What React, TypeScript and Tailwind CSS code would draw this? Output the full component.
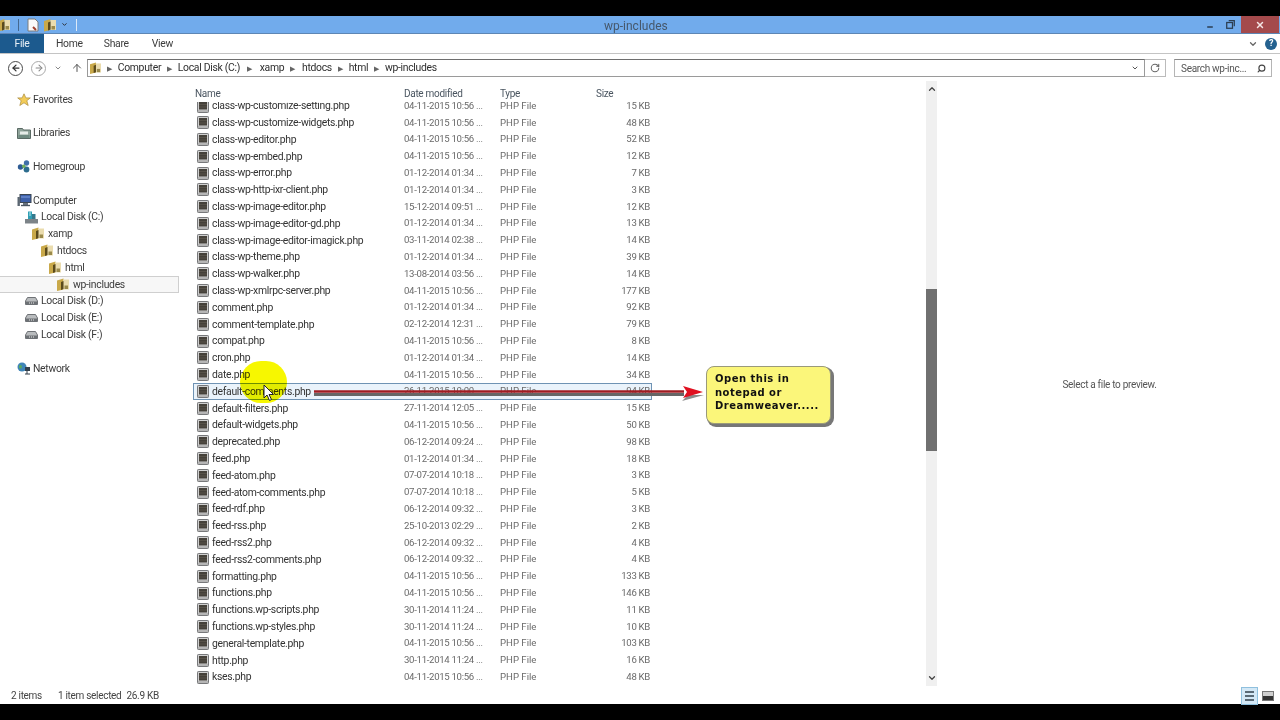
import { ArrowLeft, ArrowRight, ArrowUp, ChevronDown, ChevronUp, RotateCw, Search, X, Minus } from "lucide-react";
import type { ReactNode } from "react";

const files: [string, string, string][] = [
  ["class-wp-customize-setting.php", "04-11-2015 10:56 ...", "15 KB"],
  ["class-wp-customize-widgets.php", "04-11-2015 10:56 ...", "48 KB"],
  ["class-wp-editor.php", "04-11-2015 10:56 ...", "52 KB"],
  ["class-wp-embed.php", "04-11-2015 10:56 ...", "12 KB"],
  ["class-wp-error.php", "01-12-2014 01:34 ...", "7 KB"],
  ["class-wp-http-ixr-client.php", "01-12-2014 01:34 ...", "3 KB"],
  ["class-wp-image-editor.php", "15-12-2014 09:51 ...", "12 KB"],
  ["class-wp-image-editor-gd.php", "01-12-2014 01:34 ...", "13 KB"],
  ["class-wp-image-editor-imagick.php", "03-11-2014 02:38 ...", "14 KB"],
  ["class-wp-theme.php", "01-12-2014 01:34 ...", "39 KB"],
  ["class-wp-walker.php", "13-08-2014 03:56 ...", "14 KB"],
  ["class-wp-xmlrpc-server.php", "04-11-2015 10:56 ...", "177 KB"],
  ["comment.php", "01-12-2014 01:34 ...", "92 KB"],
  ["comment-template.php", "02-12-2014 12:31 ...", "79 KB"],
  ["compat.php", "04-11-2015 10:56 ...", "8 KB"],
  ["cron.php", "01-12-2014 01:34 ...", "14 KB"],
  ["date.php", "04-11-2015 10:56 ...", "34 KB"],
  ["default-comments.php", "26-11-2015 10:00 ...", "94 KB"],
  ["default-filters.php", "27-11-2014 12:05 ...", "15 KB"],
  ["default-widgets.php", "04-11-2015 10:56 ...", "50 KB"],
  ["deprecated.php", "06-12-2014 09:24 ...", "98 KB"],
  ["feed.php", "01-12-2014 01:34 ...", "18 KB"],
  ["feed-atom.php", "07-07-2014 10:18 ...", "3 KB"],
  ["feed-atom-comments.php", "07-07-2014 10:18 ...", "5 KB"],
  ["feed-rdf.php", "06-12-2014 09:32 ...", "3 KB"],
  ["feed-rss.php", "25-10-2013 02:29 ...", "2 KB"],
  ["feed-rss2.php", "06-12-2014 09:32 ...", "4 KB"],
  ["feed-rss2-comments.php", "06-12-2014 09:32 ...", "4 KB"],
  ["formatting.php", "04-11-2015 10:56 ...", "133 KB"],
  ["functions.php", "04-11-2015 10:56 ...", "146 KB"],
  ["functions.wp-scripts.php", "30-11-2014 11:24 ...", "11 KB"],
  ["functions.wp-styles.php", "30-11-2014 11:24 ...", "10 KB"],
  ["general-template.php", "04-11-2015 10:56 ...", "103 KB"],
  ["http.php", "30-11-2014 11:24 ...", "16 KB"],
  ["kses.php", "04-11-2015 10:56 ...", "48 KB"],
];

const FolderIcon = ({ className = "" }: { className?: string }) => (
  <svg viewBox="0 0 12 13" className={className}>
    <path d="M0 2.5 6.5.5v11L0 13z" fill="#c9a94a" />
    <path d="M6.5 1.5H12v10H6.5z" fill="#eadcae" />
    <path d="M4 4l2.5-1v8L4 12z" fill="#5a4a1c" />
    <path d="M7.5 7.5H11v3.5H7.5z" fill="#9a8a4c" />
  </svg>
);

const PhpIcon = () => (
  <svg viewBox="0 0 12 13" className="w-3 h-[13px] shrink-0">
    <rect x="0.5" y="0.5" width="11" height="12" rx="0.8" fill="#cfcfcf" stroke="#77787a" />
    <rect x="2" y="2" width="8" height="7.5" fill="#45413a" />
    <path d="M2 4.5h8M2 7h8" stroke="#5f5a50" strokeWidth="0.7" />
    <path d="M1 11h10" stroke="#9c9c9c" />
  </svg>
);

const DriveIcon = () => (
  <svg viewBox="0 0 13 8" className="w-[13px] h-2 shrink-0">
    <path d="M2.5.5h8L12.5 4v3.5H.5V4z" fill="#b9bcbe" stroke="#6f7276" />
    <path d="M1 4.5h11v3H1z" fill="#6d7175" />
    <path d="M4 6h1M6 6h1M8 6h1" stroke="#e8e8e8" />
  </svg>
);

const Star = () => (
  <svg viewBox="0 0 14 14" className="w-[14px] h-[14px]">
    <path d="M7 .8l1.9 4.1h4.4L9.8 7.7l1.4 4.8L7 9.8l-4.2 2.7 1.4-4.8L.7 4.9h4.4z" fill="#f3cc58" stroke="#a98a3a" strokeWidth="0.7" />
  </svg>
);

const LibIcon = () => (
  <svg viewBox="0 0 14 12" className="w-[14px] h-3">
    <path d="M.5 1.5h5l1 1.5h7v8.5H.5z" fill="#8fa39a" stroke="#5a6a64" />
    <path d="M3 4.5h8v3H3z" fill="#e6ece8" />
    <path d="M1.5 8h11v3h-11z" fill="#6f8a80" />
  </svg>
);

const HomeIcon = () => (
  <svg viewBox="0 0 14 13" className="w-[14px] h-[13px]">
    <circle cx="9.5" cy="3" r="2.7" fill="#3f6fa8" />
    <circle cx="3.5" cy="7" r="2.7" fill="#2e5c94" />
    <circle cx="9.5" cy="9.5" r="2.9" fill="#2d6d8e" />
    <circle cx="6.8" cy="6.2" r="1.8" fill="#6fae5a" />
  </svg>
);

const ComputerIcon = () => (
  <svg viewBox="0 0 15 13" className="w-[15px] h-[13px]">
    <rect x="3" y="0.5" width="11" height="8" fill="#3c5fa8" stroke="#3b4652" />
    <path d="M4 3h9" stroke="#7f9fe0" />
    <path d="M6 9h5v2H6z" fill="#6a7480" />
    <path d="M0.5 3h2.4v9H0.5z" fill="#5b6672" />
    <path d="M4 11.5h9" stroke="#4a5560" strokeWidth="1.4" />
  </svg>
);

const SystemDriveIcon = () => (
  <svg viewBox="0 0 13 13" className="w-[13px] h-[13px]">
    <path d="M0 8h13v4.5H0z" fill="#7c8388" />
    <path d="M3 .5h4v7.5H3z" fill="#2f9fb4" />
    <path d="M7 3h3.5v5H7z" fill="#35788c" />
    <path d="M4 2h2M4 4h2" stroke="#bfe6ee" />
  </svg>
);

const NetworkIcon = () => (
  <svg viewBox="0 0 14 13" className="w-[14px] h-[13px]">
    <circle cx="5" cy="5" r="4.5" fill="#3f85b8" />
    <path d="M2 3.5c2-1 3 0 3 1.5S3 7 2 6z" fill="#57a860" />
    <rect x="8" y="5" width="5" height="4" fill="#34404c" />
    <path d="M10 9v3M8 12h5" stroke="#34404c" />
  </svg>
);

const sep = <span className="text-[7px] text-[#666] leading-none">▶</span>;

function NavRow({ icon, label, indent, selected }: { icon?: ReactNode; label?: string; indent?: string; selected?: boolean }) {
  return (
    <div className={"flex items-center h-[16.8px] w-[179px] " + (indent ?? "") + (selected ? " bg-[#f7f7f7] border-y border-r border-[#cfcfcf]" : "")}>
      {icon && <span className="w-4 shrink-0 flex justify-start">{icon}</span>}
      {label && <span className="whitespace-nowrap">{label}</span>}
    </div>
  );
}

function App() {
  return (
    <div className="relative w-[1280px] h-[720px] bg-black overflow-hidden flex flex-col text-[10.4px] tracking-[-0.3px] text-[#3c3c3c] font-['Roboto','Noto_Sans',sans-serif] blur-[0.35px]">
      <div className="h-4 shrink-0 bg-black" />

      <div className="h-[18px] shrink-0 bg-[#71abec] border-b border-[#5d86b4] flex items-center relative">
        <FolderIcon className="w-3 h-[14px] -ml-[2px]" />
        <div className="w-px h-3 bg-[#44688f] ml-2" />
        <svg viewBox="0 0 12 14" className="w-3 h-[14px] ml-[8px]">
          <path d="M1 1h7l3 3v9H1z" fill="#fafafa" stroke="#7d7d7d" />
          <path d="M6 9l3 3" stroke="#a04030" strokeWidth="2" />
        </svg>
        <FolderIcon className="w-3 h-[14px] ml-[5px]" />
        <ChevronDown size={7} className="ml-[5px] text-[#222]" strokeWidth={3} />
        <div className="w-px h-3 bg-[#dbe9f8] ml-[8px]" />
        <div className="absolute left-[604px] top-[1px] h-full flex items-center text-[12px] tracking-normal text-[#46586c]">wp-includes</div>
        <div className="ml-auto flex items-center h-full">
          <Minus size={8} strokeWidth={4} className="text-[#2b3e52] mr-3 mt-1" />
          <svg viewBox="0 0 10 10" className="w-[9px] h-[9px] mr-[6px]">
            <path d="M3 .8h6.2V7" fill="none" stroke="#2b3e52" strokeWidth="1.4" />
            <rect x="0.8" y="2.8" width="6.4" height="6.4" fill="none" stroke="#2b3e52" strokeWidth="1.4" />
          </svg>
          <div className="w-[38px] h-[17px] bg-[#a44a4c] flex items-center justify-center mr-[1px]">
            <X size={10} strokeWidth={3.5} className="text-[#f4e6e6]" />
          </div>
        </div>
      </div>

      <div className="h-[20px] shrink-0 bg-white border-b border-[#c4c4c4] flex items-center relative">
        <div className="w-11 h-full bg-[#1c5a8e] text-[#e8f0f6] flex items-center justify-center pt-[1px]">File</div>
        <div className="ml-[12px] pt-[1px]">Home</div>
        <div className="ml-[21px] pt-[1px]">Share</div>
        <div className="ml-[23px] pt-[1px]">View</div>
        <ChevronDown size={10} strokeWidth={3} className="ml-auto text-[#666] mr-[7px]" />
        <div className="w-3 h-3 rounded-full bg-[#24618f] text-white flex items-center justify-center text-[9px] font-bold mr-[3px]">?</div>
      </div>

      <div className="h-[27px] shrink-0 bg-white flex items-center pt-[1px]">
        <div className="w-[15px] h-[15px] ml-2 rounded-full border border-[#4a4a4a] flex items-center justify-center">
          <ArrowLeft size={10} strokeWidth={3} className="text-[#333]" />
        </div>
        <div className="w-[15px] h-[15px] ml-2 rounded-full border border-[#a9a9a9] flex items-center justify-center">
          <ArrowRight size={10} strokeWidth={2.5} className="text-[#888]" />
        </div>
        <ChevronDown size={8} strokeWidth={3} className="ml-[8px] text-[#888]" />
        <ArrowUp size={12} strokeWidth={2} className="ml-[9px] text-[#555]" />
        <div className="ml-[4px] w-[1058px] h-[18px] border border-[#9a9a9a] border-t-[#6e6e6e] flex items-center text-[#2e2e2e]">
          <FolderIcon className="w-[11px] h-3 ml-[2px]" />
          <div className="ml-[6px]">{sep}</div>
          <span className="ml-[6px]">Computer</span>
          <div className="ml-[6px]">{sep}</div>
          <span className="ml-[6px]">Local Disk (C:)</span>
          <div className="ml-[7px]">{sep}</div>
          <span className="ml-[8px]">xamp</span>
          <div className="ml-[6px]">{sep}</div>
          <span className="ml-[7px]">htdocs</span>
          <div className="ml-[6px]">{sep}</div>
          <span className="ml-[6px]">html</span>
          <div className="ml-[6px]">{sep}</div>
          <span className="ml-[6px]">wp-includes</span>
          <ChevronDown size={8} strokeWidth={3} className="ml-auto text-[#555] mr-[5px]" />
        </div>
        <div className="h-[18px] w-[21px] border-y border-r border-[#bbbbbb] flex items-center justify-center">
          <RotateCw size={10} strokeWidth={2.5} className="text-[#666]" />
        </div>
        <div className="ml-[8px] w-[98px] h-[18px] border border-[#b5b5b5] border-t-[#8a8a8a] flex items-center pl-[6px] text-[10px] text-[#555]">
          <span>Search wp-inc...</span>
          <Search size={9} strokeWidth={3} className="ml-auto mr-[5px] -scale-x-100 text-[#444]" />
        </div>
      </div>

      <div className="flex-1 min-h-0 bg-white flex">
        <div className="w-[193px] shrink-0 pt-[10.2px]">
          <NavRow indent="pl-[17px]" icon={<Star />} label="Favorites" />
          <NavRow />
          <NavRow indent="pl-[17px]" icon={<LibIcon />} label="Libraries" />
          <NavRow />
          <NavRow indent="pl-[17px]" icon={<HomeIcon />} label="Homegroup" />
          <NavRow />
          <NavRow indent="pl-[17px]" icon={<ComputerIcon />} label="Computer" />
          <NavRow indent="pl-[25px]" icon={<SystemDriveIcon />} label="Local Disk (C:)" />
          <NavRow indent="pl-[32px]" icon={<FolderIcon className="w-3 h-[13px]" />} label="xamp" />
          <NavRow indent="pl-[41px]" icon={<FolderIcon className="w-3 h-[13px]" />} label="htdocs" />
          <NavRow indent="pl-[49px]" icon={<FolderIcon className="w-3 h-[13px]" />} label="html" />
          <NavRow indent="pl-[57px]" icon={<FolderIcon className="w-3 h-[13px]" />} label="wp-includes" selected />
          <NavRow indent="pl-[25px]" icon={<DriveIcon />} label="Local Disk (D:)" />
          <NavRow indent="pl-[25px]" icon={<DriveIcon />} label="Local Disk (E:)" />
          <NavRow indent="pl-[25px]" icon={<DriveIcon />} label="Local Disk (F:)" />
          <NavRow />
          <NavRow indent="pl-[17px]" icon={<NetworkIcon />} label="Network" />
        </div>

        <div className="w-[733px] shrink-0 flex flex-col min-h-0">
          <div className="h-[17px] shrink-0 flex items-center mt-[4px] text-[#4a5560] text-[10px]">
            <div className="w-[211px] pl-[2px]">Name</div>
            <div className="w-[96px]">Date modified</div>
            <div className="w-[96px]">Type</div>
            <div>Size</div>
          </div>
          <div className="flex-1 min-h-0 overflow-hidden">
            <div className="-mt-[4.4px]">
              {files.map(([name, date, size], i) => (
                <div
                  key={name}
                  className={"flex items-center h-[16.8px] w-[459px] " + (i === 17 ? "border border-[#6f93b4] bg-[#eaf3fb]" : "border border-transparent")}
                >
                  <div className="w-[210px] shrink-0 pl-[3px] flex items-center gap-[3px] text-[#333] whitespace-nowrap">
                    <PhpIcon />
                    <span>{name}</span>
                  </div>
                  <div className="w-[96px] shrink-0 text-[#6a6a6a] whitespace-nowrap text-[9.6px]">{date}</div>
                  <div className="w-[60px] shrink-0 text-[#6a6a6a] text-[9.6px] tracking-normal">PHP File</div>
                  <div className="flex-1 text-right pr-[1px] text-[#6a6a6a] text-[9.6px]">{size}</div>
                </div>
              ))}
            </div>
          </div>
        </div>

        <div className="w-[11px] shrink-0 bg-[#f0f0f0] flex flex-col items-center">
          <div className="h-[208px] w-full shrink-0 flex justify-center pt-[3px]">
            <ChevronUp size={10} strokeWidth={3} className="text-[#444]" />
          </div>
          <div className="h-[162px] w-full shrink-0 bg-[#707070]" />
          <div className="flex-1" />
          <ChevronDown size={10} strokeWidth={3} className="text-[#444] mb-[3px]" />
        </div>

        <div className="flex-1 flex items-center justify-center pt-[1px] text-[#555] text-[10px]">
          <span className="ml-[2px]">Select a file to preview.</span>
        </div>
      </div>

      <div className="h-[18px] shrink-0 bg-white flex items-center relative text-[#444] text-[10px] pt-[1px]">
        <span className="ml-[11px]">2 items</span>
        <span className="ml-[16px]">1 item selected</span>
        <span className="ml-[5px]">26.9 KB</span>
        <div className="ml-auto w-[17px] h-[18px] bg-[#d3e8f6] border border-[#8fc0de] flex flex-col justify-center gap-[2px] px-[3px]">
          <div className="h-[2px] bg-[#5a6a76]" />
          <div className="h-[2px] bg-[#5a6a76]" />
          <div className="h-[2px] bg-[#5a6a76]" />
        </div>
        <div className="ml-[4px] mr-[6px] w-3 h-[10px] bg-[#cfcfcf] border border-[#777] flex items-end">
          <div className="w-full h-1 bg-[#333]" />
        </div>
      </div>
      <div className="h-4 shrink-0 bg-black" />

      {/* highlighter + cursor + annotation sit on top of the list */}
      <div className="absolute left-[240px] top-[361px] w-[47px] h-[42px] rounded-full bg-[#f7f700] mix-blend-multiply" />
      <svg viewBox="0 0 400 24" className="absolute left-[310px] top-[380px] w-[400px] h-6">
        <path d="M4 15H378l-6 6 22-6H4z" fill="#8c8c8c" />
        <path d="M4 14.5H374" stroke="#666" strokeWidth="3" />
        <path d="M4 11.5H374" stroke="#a01c22" strokeWidth="2.5" />
        <path d="M373 6l20 6-20 6 4-6z" fill="#e01020" />
      </svg>
      <svg viewBox="0 0 12 18" className="absolute left-[263px] top-[384px] w-[12px] h-[18px]">
        <path d="M1 1v13l3-3 2.5 5.5 2-1L6 10.5h4.5z" fill="#fff" stroke="#222" strokeWidth="1" />
      </svg>
      <div className="absolute left-[706px] top-[366px] w-[125px] h-[58px] rounded-lg bg-[#fbf67a] border border-[#9a9a7a] shadow-[2px_2px_0_1px_#777] pl-[8px] pt-[5px] text-[10px] leading-[13.5px] font-bold tracking-[0.5px] text-[#111] font-['DejaVu_Sans',sans-serif]">
        <div>Open this in</div>
        <div>notepad or</div>
        <div>Dreamweaver.....</div>
      </div>
    </div>
  );
}

export default App;
